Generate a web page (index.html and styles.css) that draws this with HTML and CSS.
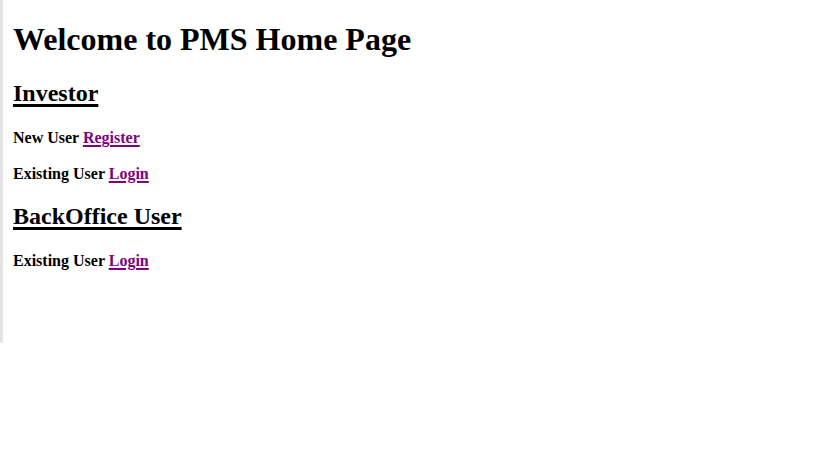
FILE: index.html
```html
<!DOCTYPE html>
<html>
<head>
<meta charset="utf-8">
<title>PMS Home</title>
<link rel="stylesheet" href="styles.css">
</head>
<body>
<div class="frame">
<h1 class="title">Welcome to PMS Home Page</h1>
<h2 class="section"><u class="uline">Investor</u></h2>
<h4 class="row">New User <a class="link" href="#">Register</a></h4>
<h4 class="row">Existing User <a class="link" href="#">Login</a></h4>
<h2 class="section"><u class="uline">BackOffice User</u></h2>
<h4 class="row">Existing User <a class="link" href="#">Login</a></h4>
</div>
</body>
</html>
```
FILE: styles.css
```css
html, body {
  margin: 0;
  padding: 0;
  background: #fff;
}
body {
  font-family: "Liberation Serif", "Times New Roman", serif;
  color: #000;
}
.frame {
  border-left: 3px solid #e3e3e3;
  padding: 1px 0 0 10px;
  height: 343px;
  box-sizing: border-box;
}
.title {
  font-size: 32px;
  margin: 20.44px 0 21.44px;
}
.section {
  font-size: 24px;
  margin: 19.9px 0 22.5px;
}
.uline {
  text-decoration-thickness: 3px;
  text-underline-offset: 3px;
}
.row {
  font-size: 16px;
  margin: 17.6px 0;
}
.link {
  color: #800080;
  text-decoration-thickness: 2px;
  text-underline-offset: 2px;
}
```
